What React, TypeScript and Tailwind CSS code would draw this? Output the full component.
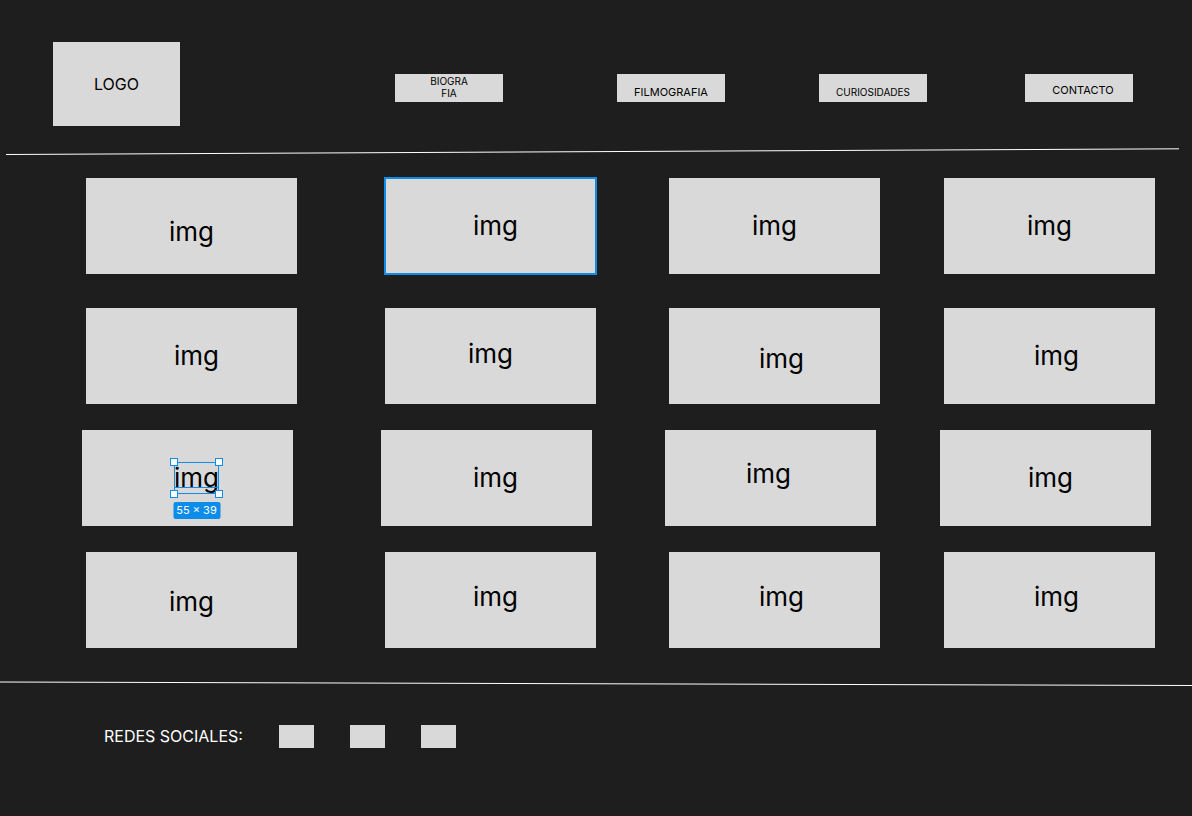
type Item = { name: string; place: string };

const navItems: Item[] = [
  { name: "FILMOGRAFIA", place: "pt-2 text-[11px]" },
  { name: "CURIOSIDADES", place: "pt-2 text-[10px]" },
  { name: "CONTACTO", place: "pt-1 pl-2 text-[11px]" },
];

const rows: { inset: string; cards: string[] }[] = [
  { inset: "pl-[86px] pr-[37px]", cards: ["pt-3", "pl-2.5", "", ""] },
  { inset: "pl-[86px] pr-[37px]", cards: ["pl-2.5", "pb-1", "pl-3.5 pt-1.5", "pl-3.5"] },
  { inset: "pl-[82px] pr-[41px]", cards: ["pl-[18px]", "pl-[18px]", "pr-1 pb-2", "pl-2.5"] },
  { inset: "pl-[86px] pr-[37px]", cards: ["pt-1", "pl-2.5 pb-1.5", "pl-3.5 pb-1.5", "pl-3.5 pb-1.5"] },
];

const rowGaps = ["mt-0", "mt-[34px]", "mt-[26px]", "mt-[26px]"];

const handles = [
  "-left-1 -top-1",
  "-right-1 -top-1",
  "-left-1 -bottom-1",
  "-right-1 -bottom-1",
];

function Selection() {
  return (
    <>
      <span className="absolute inset-0 border border-[#0d8ce9]" />
      <span className="absolute inset-x-0 bottom-1.5 h-px bg-[#0d8ce9]" />
      {handles.map((h) => (
        <span key={h} className={`absolute size-2 border border-[#0d8ce9] bg-white ${h}`} />
      ))}
      <span className="absolute top-full left-1/2 mt-2 flex h-[17px] w-[47px] -translate-x-1/2 items-center justify-center rounded-xs bg-[#0d8ce9] text-[11px] leading-none whitespace-nowrap text-white">
        55 × 39
      </span>
    </>
  );
}

export default function App() {
  return (
    <div className="flex min-h-screen flex-col overflow-x-hidden border-b border-[#231a20] bg-[#1e1e1e] font-['Inter',sans-serif] text-black">
      <header className="flex items-start pt-[42px] pr-[59px] pl-[53px]">
        <a href="#inicio" className="flex h-[84px] w-[127px] shrink-0 items-center justify-center bg-[#d9d9d9] text-base">
          LOGO
        </a>
        <nav className="mt-8 ml-[215px] grid flex-1 grid-cols-[222fr_202fr_206fr_108px]">
          <a href="#biografia" className="flex h-[28px] w-[108px] flex-col items-center bg-[#d9d9d9] pt-px text-[10px] leading-3">
            <span>BIOGRA</span>
            <span>FIA</span>
          </a>
          {navItems.map((n) => (
            <a
              key={n.name}
              href={`#${n.name.toLowerCase()}`}
              className={`flex h-[28px] w-[108px] items-center justify-center bg-[#d9d9d9] ${n.place}`}
            >
              {n.name}
            </a>
          ))}
        </nav>
      </header>

      <svg className="mt-5 h-3 w-full" viewBox="0 0 1192 12" preserveAspectRatio="none" aria-hidden="true">
        <line x1="6" y1="8.5" x2="1179" y2="2.8" stroke="#ffffff" strokeWidth="1" />
      </svg>

      <main className="pt-5">
        {rows.map((row, r) => (
          <div key={r} className={`grid grid-cols-[299fr_284fr_275fr_211px] ${row.inset} ${rowGaps[r]}`}>
            {row.cards.map((place, c) => (
              <div
                key={c}
                className={`flex h-24 w-[211px] items-center justify-center bg-[#d9d9d9] text-[26px] leading-8 ${place} ${
                  r === 0 && c === 1 ? "outline-2 -outline-offset-1 outline-[#0d8ce9]" : ""
                }`}
              >
                <span className="relative">
                  img
                  {r === 2 && c === 0 && <Selection />}
                </span>
              </div>
            ))}
          </div>
        ))}
      </main>

      <svg className="mt-8 h-2 w-full" viewBox="0 0 1192 8" preserveAspectRatio="none" aria-hidden="true">
        <line x1="0" y1="2" x2="1192" y2="5.5" stroke="#ffffff" strokeWidth="1" />
      </svg>

      <footer className="flex items-center pt-9 pl-[104px] text-base text-white">
        <span className="w-[175px]">REDES SOCIALES:</span>
        <div className="flex gap-9">
          <a href="#red-1" aria-label="Red social 1" className="h-[23px] w-[35px] bg-[#d9d9d9]" />
          <a href="#red-2" aria-label="Red social 2" className="h-[23px] w-[35px] bg-[#d9d9d9]" />
          <a href="#red-3" aria-label="Red social 3" className="h-[23px] w-[35px] bg-[#d9d9d9]" />
        </div>
      </footer>
    </div>
  );
}
